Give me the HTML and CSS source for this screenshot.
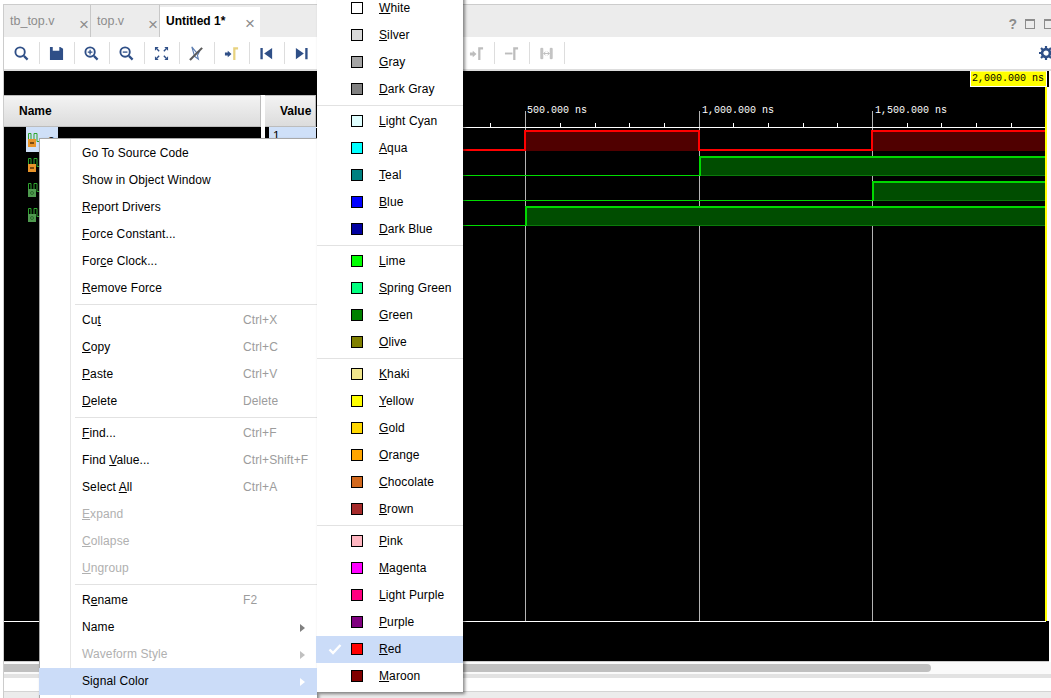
FILE: index.html
```html
<!DOCTYPE html>
<html lang="en">
<head>
    <meta charset="UTF-8">
    <meta name="viewport" content="width=device-width, initial-scale=1.0">
    <title>Untitled 1* - waveform</title>
    <link rel="stylesheet" href="styles.css">
</head>
<body>
<svg class="defs" width="0" height="0">
    <symbol id="sig-orange" viewBox="0 0 12 14">
        <path d="M.5 7V.5H3V7H6V.5H9V8.500H12" fill="none" stroke="#2fa52f" stroke-width="1"/>
        <rect x="0" y="6" width="8" height="8" fill="#e8942a"/>
        <rect x="2" y="9" width="4" height="2" fill="#7a4a10"/>
    </symbol>
    <symbol id="sig-green" viewBox="0 0 12 14">
        <path d="M.5 7V.5H3V7H6V.5H9V8.500H12" fill="none" stroke="#2fa52f" stroke-width="1"/>
        <rect x="0" y="6" width="8" height="8" fill="#4f9a4f"/>
        <circle cx="4" cy="10" r="1.5" fill="none" stroke="#2c6a2c"/>
    </symbol>
</svg>

<div class="window">
    <div class="tabs">
        <div class="tab tab-first">tb_top.v<span class="tab-x">×</span></div>
        <div class="tab tab-second">top.v<span class="tab-x">×</span></div>
        <div class="tab tab-on">Untitled 1*<span class="tab-x">×</span></div>
        <div class="tab-tools">
            <span class="help">?</span>
            <span class="winbtn"></span>
            <span class="winbtn"></span>
        </div>
    </div>

    <div class="toolbar">
        <div class="tbtn"><svg viewBox="0 0 16 16"><circle cx="6.5" cy="6.5" r="5" fill="none" stroke="#2f4f87" stroke-width="2"/><path d="M10.5 10.5l4 4" stroke="#2f4f87" stroke-width="2.4"/></svg></div>
        <div class="tbtn"><svg viewBox="0 0 16 16"><path d="M1 1h3v4h7V1h1l3 2v12H1z" fill="#2f4f87"/></svg></div>
        <div class="tbtn"><svg viewBox="0 0 16 16"><circle cx="6.5" cy="6.5" r="5" fill="none" stroke="#2f4f87" stroke-width="2"/><path d="M10.5 10.5l4 4" stroke="#2f4f87" stroke-width="2.4"/><path d="M4 6.5h5M6.5 4v5" stroke="#2f4f87" stroke-width="1.4"/></svg></div>
        <div class="tbtn"><svg viewBox="0 0 16 16"><circle cx="6.5" cy="6.5" r="5" fill="none" stroke="#2f4f87" stroke-width="2"/><path d="M10.5 10.5l4 4" stroke="#2f4f87" stroke-width="2.4"/><path d="M4 6.5h5" stroke="#2f4f87" stroke-width="1.4"/></svg></div>
        <div class="tbtn"><svg viewBox="0 0 16 16"><path d="M1 1h4L1 5zM15 1h-4l4 4zM1 15h4l-4-4zM15 15h-4l4-4z" fill="#2f4f87"/><path d="M3 3l2.5 2.5M13 3l-2.500 2.500M3 13l2.500-2.500M13 13l-2.500-2.500" stroke="#2f4f87" stroke-width="1.500"/></svg></div>
        <div class="tbtn"><svg viewBox="0 0 16 16"><path d="M3 1l5 6 3-1-2 4 1 4-4-3z" fill="none" stroke="#5d7db0" stroke-width="1.200"/><path d="M1 15L14 2" stroke="#5a5a5a" stroke-width="2.200"/></svg></div>
        <div class="tbtn"><svg viewBox="0 0 16 16"><path d="M1 7h3V5l4 3.500L4 12v-2H1z" fill="#2f4f87"/><path d="M11 15V2.500h4" fill="none" stroke="#e8d27f" stroke-width="2.400"/></svg></div>
        <div class="tbtn"><svg viewBox="0 0 16 16"><path d="M1.500 2H4v12H1.500zM14 2v12L5.500 8z" fill="#2f4f87"/></svg></div>
        <div class="tbtn"><svg viewBox="0 0 16 16"><path d="M12 2h2.500v12H12zM2 2v12l8.500-6z" fill="#2f4f87"/></svg></div>
        <div class="tbtn"></div>
        <div class="tbtn"></div>
        <div class="tbtn"></div>
        <div class="tbtn"></div>
        <div class="tbtn"><svg viewBox="0 0 16 16"><path d="M1 7h3V5l4 3.500L4 12v-2H1z" fill="#bdbdbd"/><path d="M11 15V2.500h4" fill="none" stroke="#bdbdbd" stroke-width="2.400"/></svg></div>
        <div class="tbtn"><svg viewBox="0 0 16 16"><path d="M1 8h8" stroke="#bdbdbd" stroke-width="2"/><path d="M11 15V2.500h4" fill="none" stroke="#bdbdbd" stroke-width="2.400"/></svg></div>
        <div class="tbtn"><svg viewBox="0 0 16 16"><path d="M2 2.500h2v11H2zM12 2.500h2v11h-2z" fill="#c8c8c8" stroke="#bdbdbd"/><path d="M5 8h6M5 8l2-2M5 8l2 2M11 8L9 6M11 8l-2 2" fill="none" stroke="#bdbdbd"/></svg></div>
        <div class="gear">
            <svg viewBox="0 0 16 16"><circle cx="8" cy="8" r="4.500" fill="none" stroke="#2f4f87" stroke-width="3"/><path d="M8 0v3M8 13v3M0 8h3M13 8h3M2.300 2.300l2.200 2.200M11.500 11.500l2.200 2.200M2.300 13.700l2.200-2.200M11.500 4.500l2.200-2.200" stroke="#2f4f87" stroke-width="2.500"/></svg>
        </div>
    </div>

    <div class="pane">
        <div class="col col-names">
            <div class="col-head">Name</div>
            <div class="sig sig-on"><svg class="sig-icon"><use href="#sig-orange"/></svg><span class="sig-name">a</span></div>
            <div class="sig"><svg class="sig-icon"><use href="#sig-orange"/></svg></div>
            <div class="sig"><svg class="sig-icon"><use href="#sig-green"/></svg></div>
            <div class="sig"><svg class="sig-icon"><use href="#sig-green"/></svg></div>
            <div class="col-rule"></div>
        </div>
        <div class="col-gap"></div>
        <div class="col col-values">
            <div class="col-head">Value</div>
            <div class="val-on">1</div>
        </div>
        <svg class="wave" viewBox="316 71 733 590">
            <!-- ruler -->
            <g class="labels">
                <text x="527" y="113">500.000 ns</text>
                <text x="702" y="113">1,000.000 ns</text>
                <text x="875" y="113">1,500.000 ns</text>
            </g>
            <path class="tick" d="M490.500 123v4M560.500 123v4M595.500 123v4M629.500 123v4M664.500 123v4M733.500 123v4M768.500 123v4M803.500 123v4M837.500 123v4M907.500 123v4M941.500 123v4M976.500 123v4M1011.500 123v4"/>
            <path class="major" d="M525.500 111V621M699.500 111V621M872.500 111V621"/>
            <path class="tick" d="M316 127.500H1046M316 621.500H1046"/>

            <!-- red signal -->
            <path class="fill-red" d="M525 132H699V151H525zM872 132H1046V151H872z"/>
            <path class="edge-red" d="M316 150H525V131H699V150H872V131H1046"/>
            <!-- green signals -->
            <path class="fill-green" d="M699 157H1046V176H699zM872 182H1046V201H872zM525 207H1046V226H525z"/>
            <path class="low-green" d="M699 175.500H1046M872 200.500H1046M525 225.500H1046"/>
            <path class="line-green" d="M316 175.500H699M316 200.500H872M316 225.500H525"/>
            <path class="edge-green" d="M700 176V157H1046M873 201V182H1046M526 226V207H1046"/>

            <!-- cursor -->
            <rect class="blank" x="1047" y="87" width="2" height="534"/>
            <path class="cursor" d="M1046 86V621"/>
            <rect class="cursor-box" x="970.500" y="71" width="76" height="15.500"/>
            <text class="cursor-text" x="972" y="81">2,000.000 ns</text>
        </svg>
    </div>

    <div class="hscroll"><div class="thumb"></div></div>
    <div class="statusline"></div>
    <div class="footer"></div>
</div>

<div class="menu menu-main">
    <div class="row">Go To Source Code</div>
    <div class="row">Show in Object Window</div>
    <div class="row"><u>R</u>eport Drivers</div>
    <div class="row"><u>F</u>orce Constant...</div>
    <div class="row">For<u>c</u>e Clock...</div>
    <div class="row"><u>R</u>emove Force</div>
    <div class="sep"></div>
    <div class="row"><span>Cu<u>t</u></span><span class="key">Ctrl+X</span></div>
    <div class="row"><span><u>C</u>opy</span><span class="key">Ctrl+C</span></div>
    <div class="row"><span><u>P</u>aste</span><span class="key">Ctrl+V</span></div>
    <div class="row"><span><u>D</u>elete</span><span class="key">Delete</span></div>
    <div class="sep"></div>
    <div class="row"><span><u>F</u>ind...</span><span class="key">Ctrl+F</span></div>
    <div class="row"><span>Find <u>V</u>alue...</span><span class="key">Ctrl+Shift+F</span></div>
    <div class="row"><span>Select <u>A</u>ll</span><span class="key">Ctrl+A</span></div>
    <div class="row row-off"><u>E</u>xpand</div>
    <div class="row row-off"><u>C</u>ollapse</div>
    <div class="row row-off"><u>U</u>ngroup</div>
    <div class="sep"></div>
    <div class="row"><span>R<u>e</u>name</span><span class="key">F2</span></div>
    <div class="row">Name<i class="arrow"></i></div>
    <div class="row row-off">Waveform Style<i class="arrow"></i></div>
    <div class="row row-hot">Signal Color<i class="arrow"></i></div>
    <div class="row"></div>
</div>

<div class="menu menu-color">
    <div class="row"><b class="swatch" style="background:#ffffff"></b><span><u>W</u>hite</span></div>
    <div class="row"><b class="swatch" style="background:#d9d9d9"></b><span><u>S</u>ilver</span></div>
    <div class="row"><b class="swatch" style="background:#a5a5a5"></b><span><u>G</u>ray</span></div>
    <div class="row"><b class="swatch" style="background:#808080"></b><span><u>D</u>ark Gray</span></div>
    <div class="sep"></div>
    <div class="row"><b class="swatch" style="background:#e0ffff"></b><span><u>L</u>ight Cyan</span></div>
    <div class="row"><b class="swatch" style="background:#00ffff"></b><span><u>A</u>qua</span></div>
    <div class="row"><b class="swatch" style="background:#008080"></b><span><u>T</u>eal</span></div>
    <div class="row"><b class="swatch" style="background:#0000ff"></b><span><u>B</u>lue</span></div>
    <div class="row"><b class="swatch" style="background:#0000a0"></b><span><u>D</u>ark Blue</span></div>
    <div class="sep"></div>
    <div class="row"><b class="swatch" style="background:#00ff00"></b><span><u>L</u>ime</span></div>
    <div class="row"><b class="swatch" style="background:#00ff7f"></b><span><u>S</u>pring Green</span></div>
    <div class="row"><b class="swatch" style="background:#008000"></b><span><u>G</u>reen</span></div>
    <div class="row"><b class="swatch" style="background:#808000"></b><span><u>O</u>live</span></div>
    <div class="sep"></div>
    <div class="row"><b class="swatch" style="background:#f0e68c"></b><span><u>K</u>haki</span></div>
    <div class="row"><b class="swatch" style="background:#ffff00"></b><span><u>Y</u>ellow</span></div>
    <div class="row"><b class="swatch" style="background:#ffd700"></b><span><u>G</u>old</span></div>
    <div class="row"><b class="swatch" style="background:#ffa500"></b><span><u>O</u>range</span></div>
    <div class="row"><b class="swatch" style="background:#d2691e"></b><span><u>C</u>hocolate</span></div>
    <div class="row"><b class="swatch" style="background:#a52a2a"></b><span><u>B</u>rown</span></div>
    <div class="sep"></div>
    <div class="row"><b class="swatch" style="background:#ffb6c1"></b><span><u>P</u>ink</span></div>
    <div class="row"><b class="swatch" style="background:#ff00ff"></b><span><u>M</u>agenta</span></div>
    <div class="row"><b class="swatch" style="background:#ff0080"></b><span><u>L</u>ight Purple</span></div>
    <div class="row"><b class="swatch" style="background:#800080"></b><span><u>P</u>urple</span></div>
    <div class="row row-hot"><svg class="check" viewBox="0 0 14 12"><path d="M1.500 6.500l3.500 3.500 7.500-8" fill="none" stroke="#fff" stroke-width="2.400"/></svg><b class="swatch" style="background:#ff0000"></b><span><u>R</u>ed</span></div>
    <div class="row"><b class="swatch" style="background:#800000"></b><span><u>M</u>aroon</span></div>
</div>
</body>
</html>
```

FILE: styles.css
```css
html,body{margin:0;height:698px;overflow:hidden;background:#fff;}
body{position:relative;font:12px "Liberation Sans",Arial,sans-serif;color:#000;}
.defs{position:absolute;}
.window{margin:4px 0 0 3px;border-top:1px solid #ccc;border-left:1px solid #ccc;height:693px;}

/* tab strip */
.tabs{display:flex;height:32px;background:#ececec;}
.tab{position:relative;box-sizing:border-box;height:32px;padding:9px 0 0 6px;font-size:12.500px;color:#8c8c8c;border-right:1px solid #c8c8c8;}
.tab-first{width:87px;}
.tab-second{width:69px;}
.tab-on{width:100px;margin-top:2px;height:30px;padding-top:7px;padding-left:6px;background:#fff;color:#000;font-size:12px;font-weight:bold;border:0;}
.tab-x{position:absolute;right:1px;top:11px;font:normal 17px "Liberation Sans",sans-serif;line-height:17px;color:#8c8c8c;}
.tab-on .tab-x{right:5px;top:8px;}
.tab-tools{margin-left:auto;display:flex;align-items:center;gap:9px;margin-right:-3px;padding-top:5px;}
.help{font:bold 14px "Liberation Sans",sans-serif;color:#8c8c8c;margin-right:-1px;}
.winbtn{box-sizing:border-box;width:10px;height:10px;border:2px solid #8c8c8c;border-width:2px 1px 1px;}

/* toolbar */
.toolbar{display:flex;align-items:center;height:32px;padding-left:1px;background:#fff;border-bottom:2px solid #ddd;position:relative;}
.tbtn{box-sizing:border-box;width:35px;height:22px;padding-right:2px;border-right:1px solid #ddd;display:flex;align-items:center;justify-content:center;}
.tbtn svg{width:15px;height:15px;}
.gear{position:absolute;left:1035px;top:9px;}
.gear svg{display:block;width:14px;height:14px;}

/* wave pane */
.pane{display:flex;height:590px;margin-right:2px;background:#000;border-bottom:1px solid #ccc;}
.col{flex:none;padding-top:24px;position:relative;}
.col-names{width:257px;}
.col-values{width:51px;}
.col-gap{flex:none;width:4px;margin-top:24px;background:#fff;}
.col-head{box-sizing:border-box;height:32px;line-height:30px;font-weight:bold;background:linear-gradient(#f3f3f3,#dcdcdc);border:1px solid #bcbcbc;border-width:1px 1px 1px 0;padding-left:15px;}
.sig{box-sizing:border-box;height:25px;width:32px;margin-left:22px;padding:6px 0 0 2px;display:flex;gap:8px;}
.sig-on{background:#cfe0f8;}
.sig-icon{flex:none;width:12px;height:14px;}
.sig-name{line-height:14px;}
.col-rule{position:absolute;left:0;right:0;top:550px;height:1px;background:#fff;}
.col-values .col-head{padding-left:15px;white-space:nowrap;}
.val-on{margin-left:4px;height:25px;padding:2px 0 0 4px;box-sizing:border-box;background:#cfe0f8;}
.wave{flex:none;width:733px;height:590px;}
.labels text,.cursor-text{font:10px "Liberation Mono",monospace;fill:#fff;}
.cursor-text{fill:#000;}
.tick{stroke:#fff;stroke-width:1;fill:none;}
.major{stroke:#b4b4b4;stroke-width:1;fill:none;}
.fill-red{fill:#500000;}
.edge-red{fill:none;stroke:#f00;stroke-width:2;}
.fill-green{fill:#004d00;}
.low-green{stroke:#0b7a0b;stroke-width:1;fill:none;}
.line-green{stroke:#00dc00;stroke-width:1;fill:none;}
.edge-green{fill:none;stroke:#00d800;stroke-width:2;}
.blank{fill:#fff;}
.cursor{stroke:#ff0;stroke-width:2;fill:none;}
.cursor-box{fill:#ff0;stroke:#fff;stroke-width:1;}

/* bottom bars */
.hscroll{height:10px;background:#fafafa;border-bottom:4px solid #e2e2e2;padding-top:2px;}
.thumb{height:8px;width:927px;background:#c0c0c0;border-radius:0 4px 4px 0;}
.statusline{height:13px;background:#fff;border-bottom:1px solid #d4d4d4;}
.footer{height:6px;background:#ececec;}

/* popup menus */
.menu{position:absolute;box-sizing:border-box;background:#fff;box-shadow:2px 2px 3px rgba(0,0,0,.45);letter-spacing:.1px;}
.menu-main{left:39px;top:138px;width:278px;height:575px;padding-top:1px;border:1px solid #a8a8a8;border-width:1px 0 0 1px;}
.menu-main::before{content:"";position:absolute;left:30px;top:0;bottom:0;width:1px;background:#e6e6e6;}
.menu-color{left:317px;top:-5px;width:146px;height:697px;}
.row{position:relative;box-sizing:border-box;height:27px;padding-bottom:1px;display:flex;align-items:center;white-space:nowrap;}
.menu-main .row{padding-left:42px;}
.menu-color .row{padding-left:34px;}
.row u{text-underline-offset:1px;}
.row-off{color:#b0b0b0;}
.row-hot{background:#cbdcf8;}
.menu-main .row-hot{margin-left:-1px;padding-left:43px;z-index:1;}
.menu-color .row-hot{margin-left:-1px;padding-left:35px;}
.key{position:absolute;left:203px;color:#9c9c9c;}
.arrow{position:absolute;left:260px;top:10px;border-left:5px solid #808080;border-top:4px solid transparent;border-bottom:4px solid transparent;}
.row-off .arrow{border-left-color:#c0c0c0;}
.row-hot .arrow{left:261px;border-left-color:#fff;}
.sep{height:1px;margin:2px 0 2px 35px;background:#e2e2e2;position:relative;}
.menu-color .sep{margin-left:0;}
.swatch{flex:none;box-sizing:border-box;width:12px;height:12px;margin-right:16px;border:1px solid #000;}
.check{position:absolute;left:12px;top:7px;width:14px;height:12px;}
```
